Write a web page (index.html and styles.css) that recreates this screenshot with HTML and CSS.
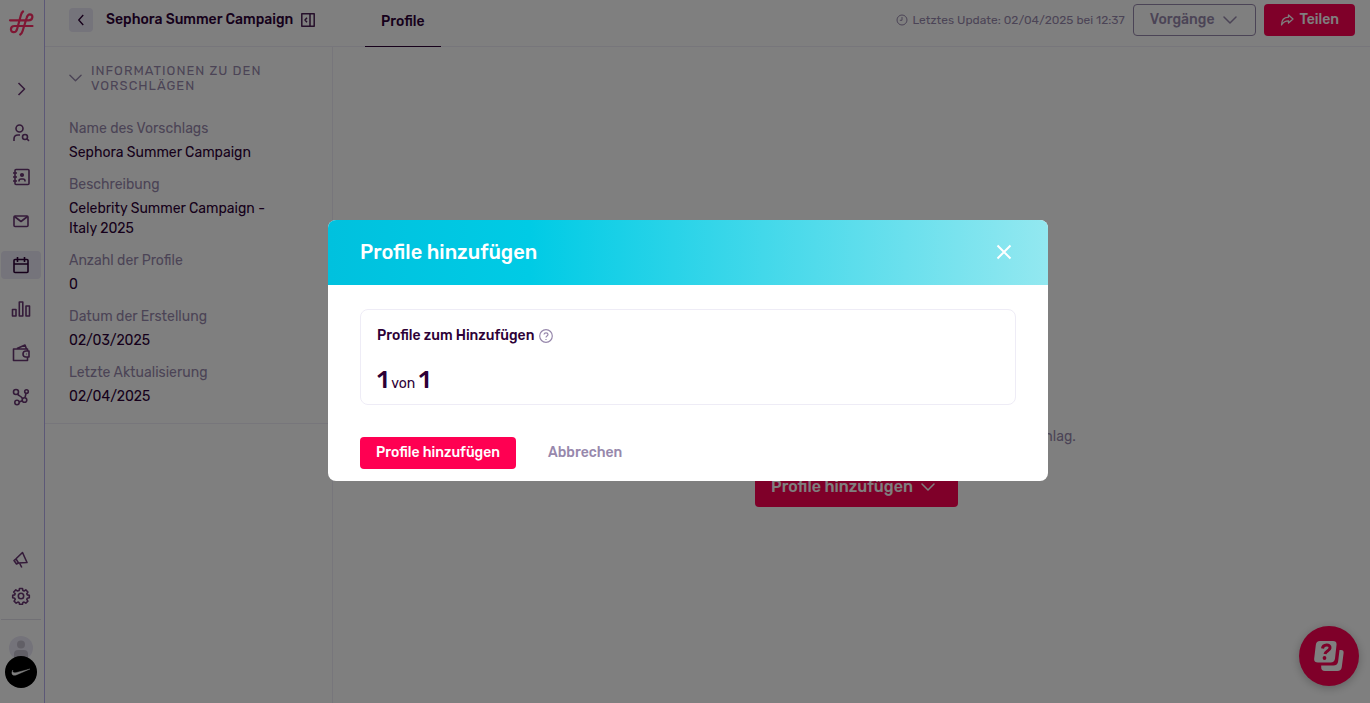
FILE: index.html
```html
<!DOCTYPE html>
<html lang="de">
<head>
<meta charset="utf-8">
<meta name="viewport" content="width=device-width, initial-scale=1">
<title>Sephora Summer Campaign</title>
<link rel="stylesheet" href="styles.css">
</head>
<body>
<div class="app">
  <nav class="rail" aria-label="Hauptnavigation">
    <a class="logo" href="#" aria-label="Startseite">
      <svg width="26" height="26" viewBox="0 0 26 26" fill="none" stroke="#ff2c66" stroke-width="2.200" stroke-linecap="round" stroke-linejoin="round"><path d="M2 10.300h18.500c4.800 0 5-6 1.400-6-1.800 0-2.700 1.400-3.300 3.700L14.600 21c-.5 1.800-1.200 2.800-2.400 3.500M15 1.500c-1.200.9-1.700 2-2.200 4L9.200 18.700c-.6 2.300-1.700 3.500-3.500 3.500-3.800 0-3.800-6.200.8-6.200H24.500"/></svg>
    </a>
    <div class="rail-list">
      <button class="rail-item" aria-label="Menü erweitern"><svg class="icon" viewBox="0 0 20 20"><path d="m7.500 4 6 6-6 6"/></svg></button>
      <button class="rail-item" aria-label="Suche"><svg class="icon" viewBox="0 0 20 20"><circle cx="8.500" cy="5.500" r="3.500"/><path d="M3 18v-2c0-2.500 1.500-4 4-4h2"/><circle cx="14" cy="14" r="2.500"/><path d="m16 16 2 1.800"/></svg></button>
      <button class="rail-item" aria-label="Kontakte"><svg class="icon" viewBox="0 0 20 20"><rect x="4" y="2.500" width="14" height="15" rx="1"/><path d="M2 6h4M2 10h4M2 14h4M8 14.500v-.500a2 2 0 0 1 2-2h2a2 2 0 0 1 2 2v.500"/><circle cx="11" cy="8" r="1.300" fill="currentColor"/></svg></button>
      <button class="rail-item" aria-label="Nachrichten"><svg class="icon" viewBox="0 0 20 20"><rect x="3" y="5" width="14" height="10.500" rx="1"/><path d="m3.500 5.500 6.500 5 6.500-5"/></svg></button>
      <button class="rail-item rail-item--active" aria-label="Kampagnen"><svg class="icon" viewBox="0 0 20 20"><rect x="3" y="4.500" width="14" height="13" rx="1"/><path d="M3 9h14M6.500 2v5M13.500 2v5"/></svg></button>
      <button class="rail-item" aria-label="Statistiken"><svg class="icon" viewBox="0 0 20 20"><rect x="1.500" y="10.500" width="3.500" height="6.500"/><rect x="8.300" y="3" width="3.500" height="14"/><rect x="15" y="7" width="3.500" height="10"/></svg></button>
      <button class="rail-item" aria-label="Zahlungen"><svg class="icon" viewBox="0 0 20 20"><path d="M16.500 8V6H2.500v11.500h14V14M6 5.500l8-3.500 1.500 4M18 8h-3a3 3 0 0 0 0 6h3z"/><path d="M15 11h.500"/></svg></button>
      <button class="rail-item" aria-label="Netzwerk"><svg class="icon" viewBox="0 0 20 20"><circle cx="5" cy="5" r="2.500"/><circle cx="15.500" cy="4.500" r="1.800"/><circle cx="13.500" cy="13" r="2.300"/><circle cx="6" cy="15.500" r="2.200"/><path d="M6.500 7c1.500 2.500 3 1.200 5 4.500M15 6.500l-1 4M8.200 15l3-1.300"/></svg></button>
    </div>
    <div class="rail-foot">
      <button class="rail-item" aria-label="Neuigkeiten"><svg class="icon" viewBox="0 0 20 20"><path d="M11.500 2.500 16 12.500 7.500 13 5.500 14 3 10.500 5 8.800zM5 8.800l2.500 4.200M8.500 13l2.300 4.500"/></svg></button>
      <button class="rail-item" aria-label="Einstellungen"><svg class="icon" viewBox="0 0 20 20"><circle cx="10" cy="10" r="2.700"/><path d="m8.500 2.500h3l.400 2 1.200.500 1.700-1.100 2.100 2.100L15.800 7.700l.5 1.200 2 .4v2.500l-2 .4-.5 1.200 1.100 1.700-2.100 2.100-1.700-1.100-1.200.5-.4 1.700h-3l-.4-1.700-1.200-.5-1.700 1.100-2.100-2.100 1.100-1.700-.5-1.200-2-.4V9.300l2-.4.5-1.200L2.700 6l2.100-2.100 1.700 1.100 1.600-.5z"/></svg></button>
      <hr class="rail-rule">
      <div class="accounts">
        <svg class="user" viewBox="0 0 24 24"><circle cx="12" cy="12" r="12" fill="#e9e6f5"/><circle cx="12" cy="8.500" r="4" fill="#c3bfcd"/><path d="M5 24v-6a4 4 0 0 1 4-4h6a4 4 0 0 1 4 4v6z" fill="#c3bfcd"/></svg>
        <svg class="brand" viewBox="0 0 32 32"><circle cx="16" cy="16" r="16" fill="#000"/><path d="M25 13 11.800 18.700c-4 1.700-6.300-.5-4-4.700-.7 2.400.7 3.300 3.800 2.500z" fill="#fff" stroke="#fff" stroke-width=".4"/></svg>
      </div>
    </div>
  </nav>

  <div class="page">
    <header class="topbar">
      <div class="crumb">
        <button class="back" aria-label="Zurück"><svg class="icon" viewBox="0 0 20 20"><path d="m12.500 4.500-5 5.500 5 5.500"/></svg></button>
        <h1 class="title">Sephora Summer Campaign</h1>
        <button class="collapse" aria-label="Seitenleiste einklappen"><svg class="icon" viewBox="0 0 14 14"><path d="M.800.800h12.400v12.400H.800zM9 .800v12.400M6 4.800 4 7l2 2.200"/></svg></button>
      </div>
      <div class="tabs"><a class="tab" href="#">Profile</a></div>
      <div class="actions">
        <span class="updated"><svg class="icon" viewBox="0 0 12 12"><circle cx="6" cy="6" r="5"/><path d="M6 3v3.300H3.800"/></svg>Letztes Update: 02/04/2025 bei 12:37</span>
        <button class="btn btn--outline">Vorgänge<svg class="chev" viewBox="0 0 14 8"><path d="m1 1 6 6 6-6"/></svg></button>
        <button class="btn btn--share"><svg class="share" viewBox="0 0 14 12"><path d="M8.500 1 13 5 8.500 9V6.800C5 6.800 3 8 1.500 11 1.500 6.500 4 3.500 8.500 3.200z"/></svg>Teilen</button>
      </div>
    </header>

    <div class="content">
      <aside class="panel">
        <section class="info">
          <button class="info-head"><svg class="chev" viewBox="0 0 14 8"><path d="m1 1 6 6 6-6"/></svg><span>Informationen zu den Vorschlägen</span></button>
          <dl class="fields">
            <div class="field"><dt>Name des Vorschlags</dt><dd>Sephora Summer Campaign</dd></div>
            <div class="field"><dt>Beschreibung</dt><dd>Celebrity Summer Campaign - Italy 2025</dd></div>
            <div class="field"><dt>Anzahl der Profile</dt><dd>0</dd></div>
            <div class="field"><dt>Datum der Erstellung</dt><dd>02/03/2025</dd></div>
            <div class="field"><dt>Letzte Aktualisierung</dt><dd>02/04/2025</dd></div>
          </dl>
        </section>
      </aside>
      <main class="main">
        <div class="empty">
          <p>Es befinden sich derzeit keine Profile in deinem aktuellen Vorschlag.</p>
          <button class="btn btn--large">Profile hinzufügen<svg class="chev" viewBox="0 0 14 8"><path d="m1 1 6 6 6-6"/></svg></button>
        </div>
      </main>
    </div>
  </div>
</div>

<button class="help" aria-label="Hilfe">
  <svg width="30" height="30" viewBox="0 0 30 30"><path d="M25.500 9h1.500q3 0 2.600 3l-1.800 14q-.5 4-4.500 4H11q-4 0-3.800-4v-1.500h12q4.500 0 5-4.500z" fill="#fff"/><path d="M6 0h13q4 0 3.500 4L21 17.500q-.5 4-4.500 4H4q-4.300 0-3.800-4L1.800 4Q2.200 0 6 0z" fill="#fff"/><path d="M8.500 7.500c.5-4.500 8-4.800 7.500-.5-.4 3-4.500 3-5 6" fill="none" stroke="#ff0052" stroke-width="3"/><circle cx="10.500" cy="17" r="1.900" fill="#ff0052"/></svg>
</button>

<div class="overlay">
  <div class="modal" role="dialog" aria-modal="true" aria-labelledby="modal-title">
    <div class="modal-head">
      <h2 id="modal-title">Profile hinzufügen</h2>
      <button class="close" aria-label="Schließen"><svg viewBox="0 0 16 16"><path d="m1.500 1.500 13 13m0-13-13 13"/></svg></button>
    </div>
    <div class="modal-body">
      <div class="card">
        <h3>Profile zum Hinzufügen<svg viewBox="0 0 14 14"><circle cx="7" cy="7" r="6.300"/><path d="M5 5.500c.2-2.300 4-2.200 4 0C9 7 7 7 7 8.500M7 10v1"/></svg></h3>
        <p class="count"><b>1</b> von <b>1</b></p>
      </div>
      <div class="modal-actions">
        <button class="btn">Profile hinzufügen</button>
        <button class="btn btn--text">Abbrechen</button>
      </div>
    </div>
  </div>
</div>
</body>
</html>
```
FILE: styles.css
```css
:root {
  --ink: #2d0036;
  --muted: #9788ac;
  --accent: #ff0052;
  --line: #eeecf6;
}

* { box-sizing: border-box; }

body {
  margin: 0;
  font: 400 14px/20px Rubik, Inter, sans-serif;
  color: var(--ink);
  background: #fff;
}

h1, h2, h3, p, dl, dd { margin: 0; }

button {
  font: inherit;
  color: inherit;
  background: none;
  border: 0;
  padding: 0;
  cursor: pointer;
}

svg { flex: none; }

.icon, .chev, .share {
  fill: none;
  stroke: currentColor;
  stroke-width: 1.5;
  stroke-linejoin: round;
}

.chev { width: 14px; height: 8px; stroke-linecap: round; }

.app { display: flex; min-height: 100vh; }

/* Icon rail */
.rail {
  display: flex;
  flex-direction: column;
  align-items: center;
  flex: none;
  width: 45px;
  padding: 10px 3px 15px 0;
  border-right: 1px solid #b9b0ef;
}
.logo { height: 26px; }
.rail-list, .rail-foot { display: flex; flex-direction: column; align-items: center; }
.rail-list { gap: 16px; margin-top: 39px; }
.rail-foot { gap: 8px; margin-top: auto; }
.rail-item {
  display: grid;
  place-items: center;
  width: 40px;
  height: 28px;
  border-radius: 4px;
  color: #693673;
}
.rail-item .icon { width: 20px; height: 20px; stroke-width: 1.6; }
.rail-item--active { background: #ebe8f6; color: var(--ink); }
.rail-rule { width: 40px; margin: 1px 0 0; border: 0; border-top: 1px solid #e2e0ea; }
.accounts { display: flex; flex-direction: column; align-items: center; margin-top: 8px; }
.user { width: 24px; height: 24px; }
.brand { width: 32px; height: 32px; margin-top: -4px; z-index: 1; }

.page { display: flex; flex-direction: column; flex: 1; min-width: 0; }

/* Top bar */
.topbar {
  display: flex;
  height: 47px;
  border-bottom: 1px solid var(--line);
}
.crumb {
  display: flex;
  align-items: center;
  width: 288px;
  padding: 0 0 6px 24px;
}
.back {
  display: grid;
  place-items: center;
  width: 24px;
  height: 24px;
  border-radius: 4px;
  background: #ebe8f6;
}
.back .icon { width: 18px; height: 18px; }
.title { margin: 0 8px 0 13px; font-size: 14px; font-weight: 500; line-height: 20px; white-space: nowrap; }
.collapse { display: flex; }
.collapse .icon { width: 14px; height: 14px; color: #4c2056; }
.tabs { display: flex; margin-left: 32px; }
.tab {
  padding: 12px 16px 0;
  margin-bottom: -1px;
  border-bottom: 1px solid var(--ink);
  color: inherit;
  font-weight: 500;
  text-decoration: none;
}
.actions {
  display: flex;
  align-items: center;
  gap: 8px;
  margin-left: auto;
  padding: 0 15px 6px 0;
}
.updated { display: flex; align-items: center; gap: 4px; font-size: 12px; color: var(--muted); white-space: nowrap; }
.updated .icon { width: 12px; height: 12px; stroke-width: 1; }

.btn {
  display: flex;
  align-items: center;
  gap: 8px;
  height: 32px;
  padding: 0 16px;
  border-radius: 4px;
  background: var(--accent);
  color: #fff;
  font-weight: 500;
  white-space: nowrap;
}
.btn--outline { padding-right: 18px; border: 1px solid var(--muted); background: none; color: var(--muted); }
.btn--share { gap: 6px; }
.share { width: 14px; height: 12px; stroke-width: 1.3; }
.btn--large { height: 40px; padding-right: 23px; font-size: 16px; }
.btn--text { background: none; color: var(--muted); }

/* Proposal details */
.content { display: flex; flex: 1; }
.panel { flex: none; width: 288px; border-right: 1px solid var(--line); }
.info { padding: 16px 24px; border-bottom: 1px solid var(--line); }
.info-head {
  display: flex;
  align-items: center;
  gap: 9px;
  color: var(--muted);
  font-size: 13px;
  line-height: 15px;
  letter-spacing: 1px;
  text-align: left;
  text-transform: uppercase;
}
.info-head .chev { width: 13px; }
.fields { display: grid; gap: 12px; margin-top: 26px; padding-right: 24px; }
.field { display: grid; gap: 4px; }
.field dt { color: var(--muted); }

/* Empty state */
.main { display: flex; flex: 1; align-items: center; justify-content: center; padding-left: 10px; }
.empty { display: flex; flex-direction: column; align-items: center; gap: 20px; padding-top: 184px; color: var(--muted); }

.help {
  position: fixed;
  right: 11px;
  bottom: 17px;
  display: grid;
  place-items: center;
  width: 60px;
  height: 60px;
  border-radius: 50%;
  background: var(--accent);
  box-shadow: 0 2px 10px rgba(0, 0, 0, .25);
}

/* Dialog */
.overlay {
  position: fixed;
  inset: 0;
  z-index: 10;
  display: flex;
  align-items: center;
  justify-content: center;
  padding: 0 0 2px 6px;
  background: rgba(0, 0, 0, .5);
}
.modal { width: 720px; max-width: 100%; border-radius: 8px; background: #fff; overflow: hidden; }
.modal-head {
  display: flex;
  align-items: center;
  justify-content: space-between;
  height: 65px;
  padding: 0 36px 2px 32px;
  background: linear-gradient(90deg, #00c1de, #00cbe5 28%, #93e8f0);
  color: #fff;
}
.modal-head h2 { font-size: 20px; line-height: 24px; font-weight: 500; }
.close { display: flex; }
.close svg { width: 16px; height: 16px; fill: none; stroke: #fff; stroke-width: 2; }
.modal-body { padding: 24px 32px 12px; }
.card { padding: 16px 16px 4px; border: 1px solid var(--line); border-radius: 8px; }
.card h3 { display: flex; align-items: center; gap: 5px; font-size: 14px; font-weight: 500; line-height: 20px; }
.card h3 svg { width: 14px; height: 14px; fill: none; stroke: var(--muted); stroke-width: 1.2; }
.count { margin-top: 22px; line-height: 32px; }
.count b { font-size: 24px; line-height: 24px; font-weight: 500; }
.modal-actions { display: flex; gap: 16px; margin-top: 32px; }
```
